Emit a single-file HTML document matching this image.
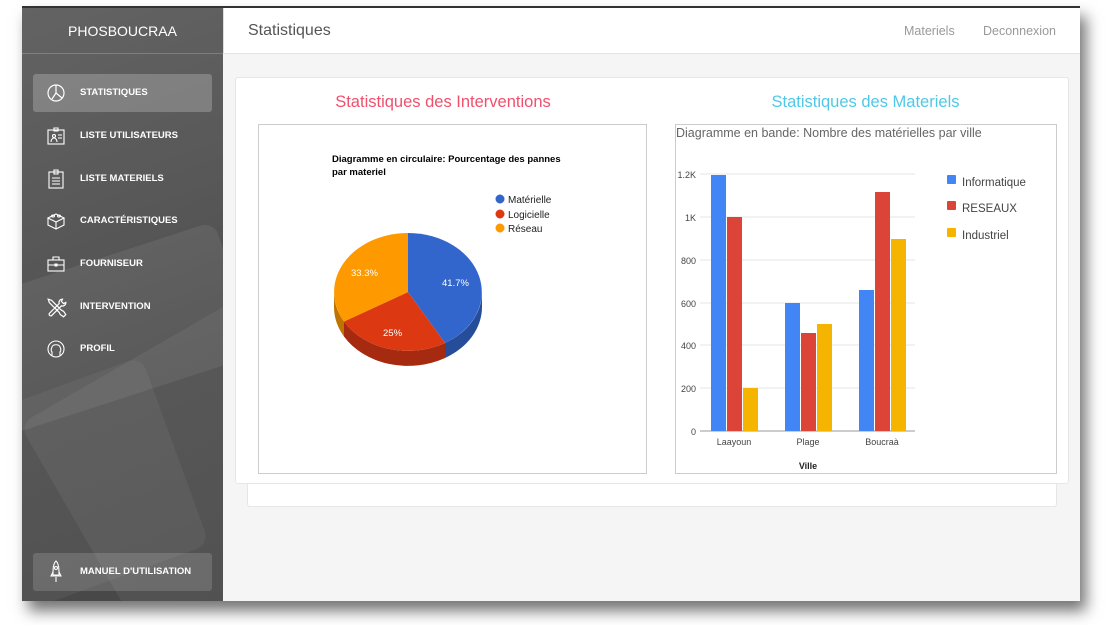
<!DOCTYPE html>
<html><head><meta charset="utf-8"><style>
*{margin:0;padding:0;box-sizing:border-box}
body{width:1119px;height:625px;background:#fff;position:relative;overflow:hidden;font-family:"Liberation Sans",sans-serif}
#win{position:absolute;left:22px;top:6px;width:1058px;height:595px;background:#f5f5f5;border-top:2px solid #333;box-shadow:6px 10px 14px rgba(0,0,0,.55);overflow:hidden}
#side{position:absolute;left:0;top:0;width:201px;height:595px;background:linear-gradient(160deg,#636363 0%,#585858 35%,#4e4e4e 60%,#474747 100%);overflow:hidden}
.sh{position:absolute;background:rgba(255,255,255,.07);border-radius:14px}
#brand{position:absolute;top:0;left:0;width:201px;height:46px;border-bottom:1px solid rgba(255,255,255,.2);color:#fff;font-size:14px;text-align:center;line-height:46px}
.nav{position:absolute;left:11px;width:179px;height:38px;color:#fff;font-size:9.5px;font-weight:bold;line-height:38px;padding-left:47px;border-radius:3px}
.nav svg{position:absolute;left:13px;top:9px}
.act{background:rgba(255,255,255,.22)}
#hdr{position:absolute;left:201px;top:0;right:0;height:46px;background:#fff;border-bottom:1px solid #e3e3e3;border-left:1px solid #ddd}
#hdr .t{position:absolute;left:24px;top:14px;font-size:16px;color:#555}
#hdr .l{position:absolute;top:16px;font-size:12.5px;color:#999}
.card{position:absolute;background:#fff;border:1px solid #e6e6e6;border-radius:3px}
.h{position:absolute;font-size:16.5px;text-align:center}
</style></head><body>
<div id="win">
 <div id="side">
  <div class="sh" style="left:-40px;top:250px;width:260px;height:140px;transform:rotate(-18deg)"></div>
  <div class="sh" style="left:60px;top:330px;width:260px;height:320px;transform:rotate(-30deg);background:rgba(255,255,255,.06)"></div>
  <div class="sh" style="left:-60px;top:380px;width:220px;height:200px;transform:rotate(-20deg);background:rgba(255,255,255,.05)"></div>
  <div id="brand">PHOSBOUCRAA</div>
  <div class="nav act" style="top:66px"><svg width="20" height="20" viewBox="0 0 20 20" fill="none" stroke="#fff" stroke-width="1.2"><circle cx="10" cy="10" r="8"/><path d="M10 2v8l6 5M10 10l-4 6"/></svg>STATISTIQUES</div>
  <div class="nav" style="top:109px"><svg width="20" height="20" viewBox="0 0 20 20" fill="none" stroke="#fff" stroke-width="1.1"><rect x="2" y="4" width="16" height="14"/><path d="M8 2h4v3H8zM5 16c0-3 2-4 3-4s3 1 3 4M12 9h4M12 12h4"/><circle cx="8" cy="10" r="1.5"/></svg>LISTE UTILISATEURS</div>
  <div class="nav" style="top:152px"><svg width="20" height="20" viewBox="0 0 20 20" fill="none" stroke="#fff" stroke-width="1.1"><rect x="3" y="3" width="14" height="16"/><path d="M8 1h4v4H8zM6 9h8M6 12h8M6 15h8"/></svg>LISTE MATERIELS</div>
  <div class="nav" style="top:194px"><svg width="20" height="20" viewBox="0 0 20 20" fill="none" stroke="#fff" stroke-width="1.1"><path d="M2 7l8-4 8 4-8 4zM2 7v7l8 4 8-4V7M10 11v7"/><ellipse cx="7" cy="5" rx="1.5" ry="1"/><ellipse cx="13" cy="5" rx="1.5" ry="1"/></svg>CARACTÉRISTIQUES</div>
  <div class="nav" style="top:237px"><svg width="20" height="20" viewBox="0 0 20 20" fill="none" stroke="#fff" stroke-width="1.1"><rect x="2" y="6" width="16" height="11"/><path d="M7 6V3h6v3M2 11h16M9 10h2v2H9z"/></svg>FOURNISEUR</div>
  <div class="nav" style="top:280px"><svg width="22" height="22" viewBox="0 0 20 20" fill="none" stroke="#fff" stroke-width="1.1"><path d="M2 2l3 1 9 9 2 1 2 3-2 2-3-2-1-2-9-9zM15 2a3 3 0 0 0-3 4L3 15a1.5 1.5 0 0 0 2 2l9-9a3 3 0 0 0 4-3l-2 1-2-2z"/></svg>INTERVENTION</div>
  <div class="nav" style="top:322px"><svg width="20" height="20" viewBox="0 0 20 20" fill="none" stroke="#fff" stroke-width="1.1"><circle cx="10" cy="10" r="8"/><path d="M6 17v-4c-1-1-1-3 0-5 1-3 7-3 8 0 1 2 1 4 0 5v4"/></svg>PROFIL</div>
  <div class="nav" style="top:545px;height:38px;background:rgba(255,255,255,.15);border-radius:3px"><svg width="20" height="24" viewBox="0 0 20 24" fill="none" stroke="#fff" stroke-width="1.1" style="top:7px"><path d="M10 1c3 3 3 8 3 14H7c0-6 0-11 3-14zM7 12l-2 4h10l-2-4M10 17v5"/><circle cx="10" cy="8" r="1.5"/></svg>MANUEL D'UTILISATION</div>
 </div>
 <div id="hdr"><div class="t">Statistiques</div><div class="l" style="left:680px">Materiels</div><div class="l" style="left:759px">Deconnexion</div></div>
 <div class="card" style="left:225px;top:474px;width:810px;height:25px;border-top:none"></div>
 <div class="card" style="left:213px;top:69px;width:834px;height:407px"></div>
 <div class="h" style="left:236px;top:85px;width:370px;color:#f0506e">Statistiques des Interventions</div>
 <div class="h" style="left:660px;top:85px;width:367px;color:#4fc8e8">Statistiques des Materiels</div>
 <svg style="position:absolute;left:236px;top:116px" width="390" height="351" viewBox="0 0 390 351">
  <rect x="0.5" y="0.5" width="388" height="349" fill="#fff" stroke="#ccc"/>
  <g font-family="Liberation Sans,sans-serif">
  <text x="74" y="38" font-size="9.5" font-weight="bold" fill="#000">Diagramme en circulaire: Pourcentage des pannes</text>
  <text x="74" y="51" font-size="9.5" font-weight="bold" fill="#000">par materiel</text>
  <circle cx="242" cy="75" r="4.5" fill="#3366cc"/><text x="250" y="79" font-size="10" fill="#222">Matérielle</text>
  <circle cx="242" cy="90" r="4.5" fill="#dc3912"/><text x="250" y="94" font-size="10" fill="#222">Logicielle</text>
  <circle cx="242" cy="104" r="4.5" fill="#ff9900"/><text x="250" y="108" font-size="10" fill="#222">Réseau</text>
  <!-- depth -->
  <path d="M76 168 A74 59 0 0 0 86 197.5 v15 A74 59 0 0 1 76 183z" fill="#bf7300"/>
  <path d="M86 197.5 A74 59 0 0 0 187 219 v15 A74 59 0 0 1 86 212.5z" fill="#a52a0f"/>
  <path d="M187 219 A74 59 0 0 0 224 168 v15 A74 59 0 0 1 187 234z" fill="#264d99"/>
  <!-- top -->
  <path d="M150 168 L150 109 A74 59 0 0 1 187 219 Z" fill="#3366cc"/>
  <path d="M150 168 L187 219 A74 59 0 0 1 86 197.5 Z" fill="#dc3912"/>
  <path d="M150 168 L86 197.5 A74 59 0 0 1 150 109 Z" fill="#ff9900"/>
  <text x="184" y="162" font-size="9.5" fill="#fff">41.7%</text>
  <text x="125" y="212" font-size="9.5" fill="#fff">25%</text>
  <text x="93" y="152" font-size="9.5" fill="#fff">33.3%</text>
  </g>
 </svg>
 <svg style="position:absolute;left:653px;top:116px" width="383" height="351" viewBox="0 0 383 351">
  <rect x="0.5" y="0.5" width="381" height="349" fill="#fff" stroke="#ccc"/>
  <g font-family="Liberation Sans,sans-serif" fill="#444">
  <text x="1" y="13" font-size="12.5" fill="#666">Diagramme en bande: Nombre des matérielles par ville</text>
  <g transform="translate(0,-2)">
  <g stroke="#e5e5e5"><line x1="25" y1="52" x2="240" y2="52"/><line x1="25" y1="95" x2="240" y2="95"/><line x1="25" y1="138" x2="240" y2="138"/><line x1="25" y1="181" x2="240" y2="181"/><line x1="25" y1="223" x2="240" y2="223"/><line x1="25" y1="266" x2="240" y2="266"/></g>
  <line x1="25" y1="309" x2="240" y2="309" stroke="#999"/>
  <g font-size="9" text-anchor="end"><text x="21" y="56">1.2K</text><text x="21" y="99">1K</text><text x="21" y="142">800</text><text x="21" y="185">600</text><text x="21" y="227">400</text><text x="21" y="270">200</text><text x="21" y="313">0</text></g>
  <rect x="36" y="53" width="15" height="256" fill="#4285f4"/>
  <rect x="52" y="95" width="15" height="214" fill="#db4437"/>
  <rect x="68" y="266" width="15" height="43" fill="#f4b400"/>
  <rect x="110" y="181" width="15" height="128" fill="#4285f4"/>
  <rect x="126" y="211" width="15" height="98" fill="#db4437"/>
  <rect x="142" y="202" width="15" height="107" fill="#f4b400"/>
  <rect x="184" y="168" width="15" height="141" fill="#4285f4"/>
  <rect x="200" y="70" width="15" height="239" fill="#db4437"/>
  <rect x="216" y="117" width="15" height="192" fill="#f4b400"/>
  <g font-size="9" text-anchor="middle"><text x="59" y="323">Laayoun</text><text x="133" y="323">Plage</text><text x="207" y="323">Boucraà</text><text x="133" y="347" font-weight="bold" fill="#222">Ville</text></g>
  </g>
  <rect x="272" y="51" width="9" height="9" rx="1" fill="#4285f4"/><text x="287" y="62" font-size="11.5">Informatique</text>
  <rect x="272" y="77" width="9" height="9" rx="1" fill="#db4437"/><text x="287" y="88" font-size="11.5">RESEAUX</text>
  <rect x="272" y="104" width="9" height="9" rx="1" fill="#f4b400"/><text x="287" y="115" font-size="11.5">Industriel</text>
  </g>
 </svg>
</div>
</body></html>
